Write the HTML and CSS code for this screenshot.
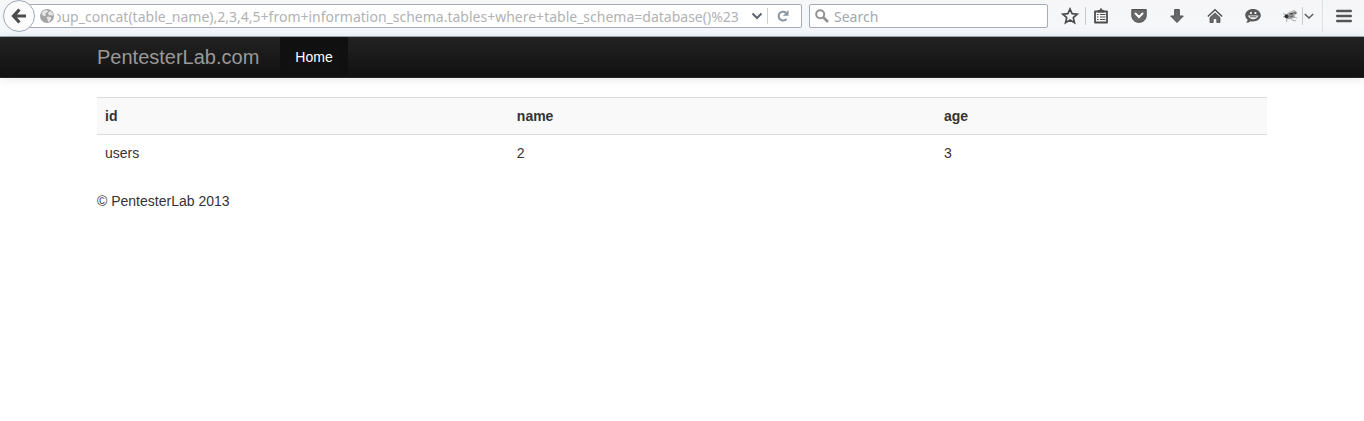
FILE: index.html
```html
<!DOCTYPE html>
<html lang="en">
<head>
<meta charset="utf-8">
<title>PentesterLab.com</title>
<link rel="stylesheet" href="styles.css">
</head>
<body>
<div class="toolbar">
  <button class="back" aria-label="Back">
    <svg width="16" height="16" viewBox="0 0 16 16"><path d="M8.500 1.500 2.500 8l6 6.500M3 8h12" fill="none" stroke="#4c4c4c" stroke-width="3.200"/></svg>
  </button>
  <div class="field address">
    <svg class="globe" width="16" height="16" viewBox="0 0 16 16"><circle cx="8" cy="8" r="7" fill="#a3a3a3"/><path d="M2.500 5 5 2.500l3-.5 1 1.500L7.500 5 6 5.500 7 7 5.500 8.500l-2-1.500zM10 3.500l2-.3 2 2.800-.5 2-2-1-1.500.5-1-2zM8.500 8.500l3 .5 1 1.500-2 3-1.500.5-.3-2.500-1.200-1.500z" fill="#e6e6e6"/></svg>
    <input class="text url" type="text" aria-label="Address" value="oup_concat(table_name),2,3,4,5+from+information_schema.tables+where+table_schema=database()%23">
    <button class="plain history" aria-label="Show history"><svg width="12" height="12" viewBox="0 0 12 12"><path d="m1.500 3.500 4.500 4.500 4.500-4.500" fill="none" stroke="#5c6570" stroke-width="2"/></svg></button>
    <button class="plain reload" aria-label="Reload"><svg width="12" height="12" viewBox="0 0 12 12"><path d="M9.500 8.800A4.400 4.400 0 1 1 9 2.800" fill="none" stroke="#8b96a2" stroke-width="2"/><path d="M11.500 0v5.800H5.800z" fill="#8b96a2"/></svg></button>
  </div>
  <div class="field search">
    <svg width="14" height="14" viewBox="0 0 14 14"><circle cx="5.200" cy="5.200" r="4" fill="none" stroke="#929292" stroke-width="2"/><path d="m8 8 5 5" stroke="#929292" stroke-width="2.600"/></svg>
    <input class="text" type="text" aria-label="Search" placeholder="Search">
  </div>
  <div class="actions">
    <button class="plain star" aria-label="Bookmark this page"><svg width="18" height="18" viewBox="0 0 18 18"><path d="m9 2 2.100 4.700 5.100.5-3.900 3.400 1.200 5.100L9 13l-4.500 2.700 1.200-5.100-3.900-3.400 5.100-.5z" fill="none" stroke="#4d4d4d" stroke-width="1.700"/></svg></button>
    <button class="plain list" aria-label="Bookmarks"><svg width="16" height="16" viewBox="0 0 16 16"><path d="M2 3.500h12v11H2z" fill="#f7f7f7" stroke="#4d4d4d" stroke-width="1.800" stroke-linejoin="round"/><path d="M5 2.500h1.500L8 .5l1.500 2H11V4H5z" fill="#4d4d4d" stroke="#4d4d4d"/><path d="M4 6.500h1.500M7 6.500h5.500M4 9h1.500M7 9h5.500M4 11.500h1.500M7 11.500h5.500" stroke="#4d4d4d" stroke-width="1.100"/></svg></button>
    <button class="plain tool" aria-label="Save to Pocket"><svg width="16" height="16" viewBox="0 0 16 16"><path d="M.8 1.500h14.400v5.700C15.200 11.800 12 14.300 8 14.300S.8 11.800.8 7.200z" fill="#686868" stroke="#505050"/><path d="M4.500 5.500 8 9l3.500-3.500" fill="none" stroke="#fff" stroke-width="2" stroke-linecap="round"/></svg></button>
    <button class="plain tool" aria-label="Downloads"><svg width="16" height="16" viewBox="0 0 16 16"><path d="M5.700 1.500h4.600V8h4L8 14.500 1.700 8h4z" fill="#686868" stroke="#505050"/></svg></button>
    <button class="plain tool" aria-label="Home"><svg width="16" height="16" viewBox="0 0 16 16"><path d="m.8 8.500 7.200-6.700 7.200 6.700" fill="none" stroke="#505050" stroke-width="1.500"/><path d="m8 5 5 4.500v5H9.800v-4H6.200v4H3v-5z" fill="#686868" stroke="#505050" stroke-width=".8"/></svg></button>
    <button class="plain tool" aria-label="Chat"><svg width="16" height="16" viewBox="0 0 16 16"><path d="M8 1c4.300 0 7.800 2.700 7.800 6.300S12.300 13.500 8 13.500q-1.300 0-2.500-.3-2 1.800-4.500 1.600 1.500-1 1.600-3Q.2 10 .2 7.300C.2 3.700 3.700 1 8 1z" fill="#5a5a5a"/><path d="M5 4h1.800v2H5zM9.500 4h1.800v2H9.500zM3 7.500h10.400Q12 11.300 8.200 11.300T3 7.500z" fill="#f2f2f2"/><path d="M5 8.800h6.500" stroke="#5a5a5a"/></svg></button>
    <button class="plain fly" aria-label="Fly"><svg width="16" height="16" viewBox="0 0 16 16"><path d="M1 5.500 4 7M1 9l3-.5M5 10l-.5 4M8 10l2 2 4 1M11 9l4 1M10 4l3-2" stroke="#999" fill="none" stroke-width=".8"/><ellipse cx="10" cy="5.500" rx="5" ry="2.600" transform="rotate(-16 10 5.500)" fill="#bbb"/><ellipse cx="8.500" cy="8.700" rx="4.500" ry="2.200" transform="rotate(-12 8.500 8.700)" fill="#9a9a9a"/><path d="m7 6 3 .3 2-1.800M8 9l3-1" stroke="#666"/><circle cx="4.500" cy="8.300" r="2" fill="#333"/><circle cx="13.300" cy="5" r="1.300" fill="#777"/></svg></button>
    <button class="plain drop" aria-label="Fly options"><svg width="10" height="10" viewBox="0 0 10 10"><path d="m.8 3 4.200 4 4.200-4" fill="none" stroke="#606060" stroke-width="1.600"/></svg></button>
    <button class="plain menu" aria-label="Menu"><svg width="16" height="14" viewBox="0 0 16 14"><path d="M1.300 2h13.400M1.300 7h13.400M1.300 12h13.400" stroke="#555" stroke-width="2.600" stroke-linecap="round"/></svg></button>
  </div>
</div>
<nav class="navbar">
  <div class="container nav-inner">
    <a class="brand" href="#">PentesterLab.com</a>
    <a class="nav-link" href="#">Home</a>
  </div>
</nav>
<main class="container">
  <table class="results">
    <thead><tr><th class="col-id">id</th><th class="col-name">name</th><th>age</th></tr></thead>
    <tbody><tr><td>users</td><td>2</td><td>3</td></tr></tbody>
  </table>
  <footer>© PentesterLab 2013</footer>
</main>
</body>
</html>
```

FILE: styles.css
```css
* { box-sizing: border-box; }
body {
  margin: 0;
  background: #fff;
  color: #333;
  font: 14px/20px "Liberation Sans", Arial, sans-serif;
}
svg { display: block; flex: none; }
.toolbar {
  display: flex;
  align-items: center;
  height: 37px;
  padding: 0 0 5px 3px;
  background: linear-gradient(#f6f6f7, #f4f7fa);
  border-bottom: 1px solid #a0a9b5;
}
button { font: inherit; }
.back {
  z-index: 1;
  display: flex;
  flex: none;
  align-items: center;
  justify-content: center;
  width: 32px;
  height: 32px;
  padding: 0;
  border: 1px solid #a0a9b5;
  border-radius: 50%;
  background: #fbfbfc;
}
.field {
  display: flex;
  align-items: center;
  height: 24px;
  border: 1px solid #a5acb6;
  border-radius: 2px;
  background: #fff;
}
.address {
  flex: 1;
  min-width: 0;
  margin-left: -8px;
  padding-left: 11px;
}
.search {
  width: 239px;
  margin-left: 7px;
  padding-left: 5px;
  gap: 5px;
}
.text {
  flex: 1;
  min-width: 0;
  height: 22px;
  padding: 2px 0 0;
  border: 0;
  outline: 0;
  background: transparent;
  color: #b0b2b5;
  font: 14px/20px "Noto Sans", sans-serif;
}
.text::placeholder { color: #a3a8ae; opacity: 1; }
.url {
  margin-left: 2px;
  text-indent: -4px;
}
.plain {
  display: flex;
  flex: none;
  align-items: center;
  justify-content: center;
  height: 18px;
  padding: 0;
  border: 0;
  background: transparent;
}
.history { width: 20px; }
.reload {
  width: 34px;
  height: 16px;
  padding-right: 3px;
  border-left: 1px solid #ccd0d5;
}
.actions {
  display: flex;
  flex: none;
  align-items: center;
  margin-left: 7px;
}
.star { width: 30px; }
.list {
  width: 35px;
  padding-right: 4px;
  border-left: 1px solid #c8ccd1;
}
.tool { width: 38px; }
.fly {
  width: 30px;
  padding-left: 6px;
}
.drop {
  width: 20px;
  padding-right: 8px;
  border-left: 1px solid #c8ccd1;
}
.menu {
  width: 42px;
  height: 32px;
  border-left: 1px solid #dde0e4;
}
.container {
  width: 100%;
  max-width: 1170px;
  margin: 0 auto;
}
.navbar {
  margin-bottom: 19px;
  border-bottom: 1px solid #252525;
  background: linear-gradient(#222, #111);
  box-shadow: 0 1px 10px rgba(0, 0, 0, 0.1);
}
.nav-inner { display: flex; }
.brand {
  padding: 10px 21px 10px 0;
  color: #999;
  font-size: 20px;
  text-decoration: none;
}
.nav-link {
  padding: 10px 15px;
  background: #111;
  box-shadow: inset 0 3px 8px rgba(0, 0, 0, 0.125);
  color: #fff;
  text-decoration: none;
}
.results {
  width: 100%;
  margin-bottom: 20px;
  border-collapse: separate;
  border-spacing: 0;
}
th, td {
  padding: 8px;
  border-top: 1px solid #ddd;
  text-align: left;
}
th { background: #f9f9f9; }
.col-id { width: 35.2%; }
.col-name { width: 36.5%; }
```
